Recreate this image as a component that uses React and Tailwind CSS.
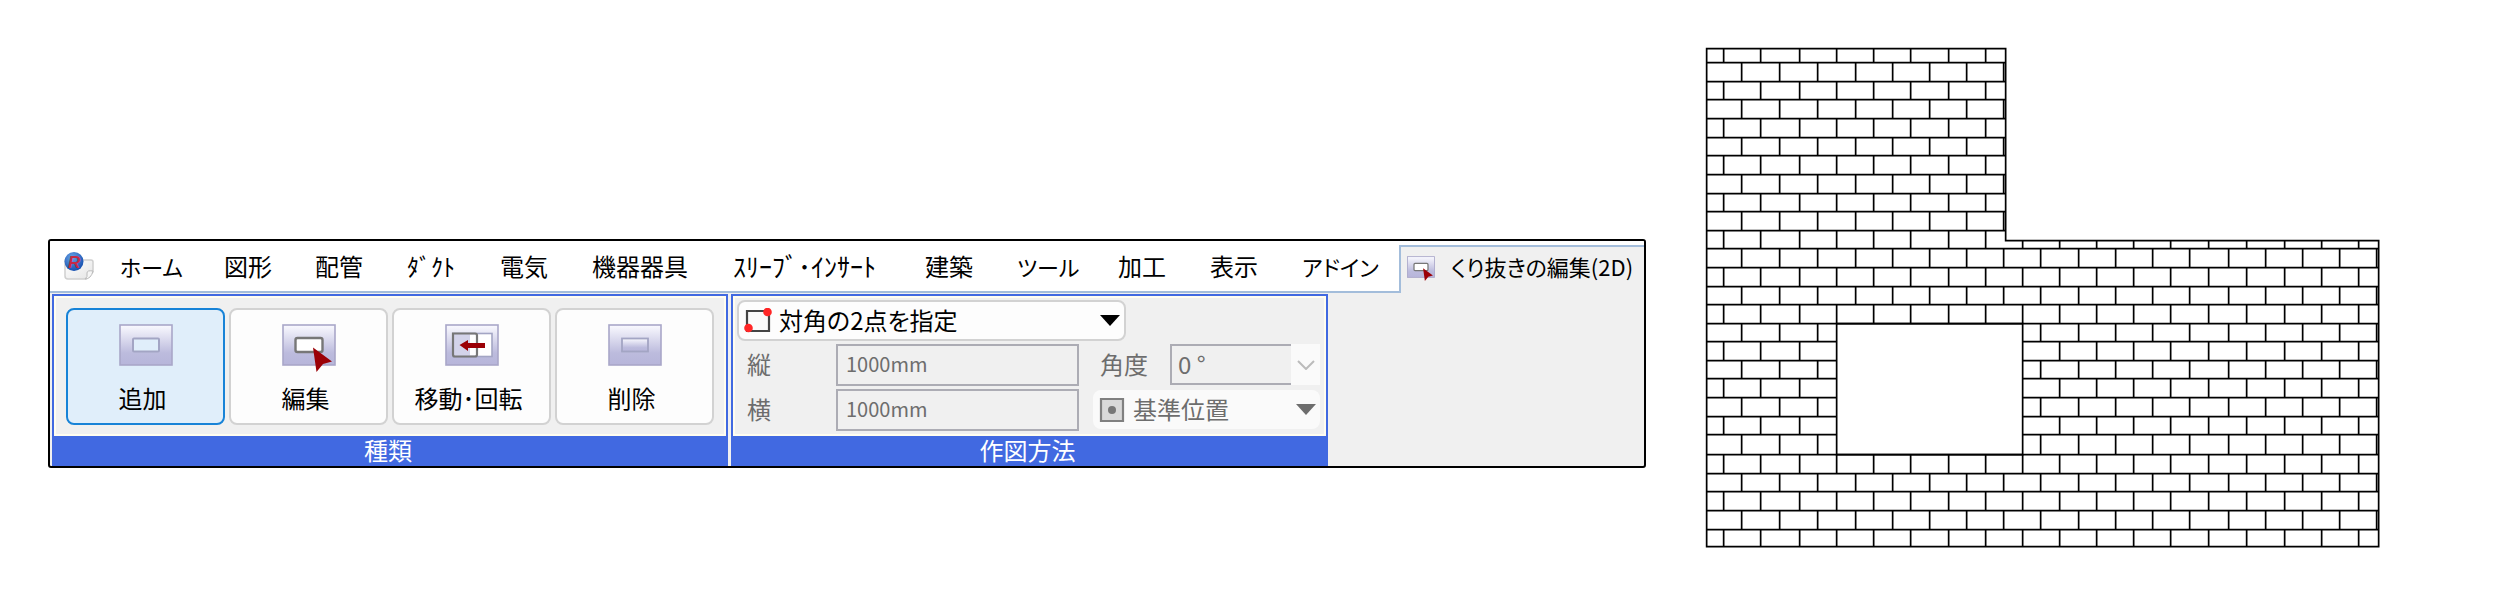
const rowLines = [48, 62, 81, 99, 118, 137, 155, 174, 193, 211, 230, 248, 267, 286, 304, 323, 341, 360, 378, 397, 416, 434, 454, 473, 491, 510, 529, 546];
const oddJoints = [1723, 1760, 1799, 1836, 1873, 1910, 1948, 1985, 2022, 2059, 2096, 2133, 2170, 2208, 2246, 2284, 2321, 2358];
const evenJoints = [1741, 1779, 1817, 1855, 1892, 1929, 1966, 2003, 2040, 2078, 2115, 2152, 2189, 2228, 2265, 2302, 2339, 2376];
const L = 1706, T = 48, R = 2378, B = 546, NX = 2005, NY = 240;
const hole = { l: 1836, r: 2022, t: 323, b: 454 };

function brickPath() {
  const d = [];
  rowLines.slice(1, -1).forEach((y) => {
    const right = y < NY ? NX : R;
    if (y > hole.t && y < hole.b) d.push(`M${L} ${y}H${hole.l}M${hole.r} ${y}H${right}`);
    else d.push(`M${L} ${y}H${right}`);
  });
  rowLines.slice(0, -1).forEach((y, i) => {
    const end = rowLines[i + 1];
    (i % 2 ? evenJoints : oddJoints).forEach((x) => {
      if (x > NX && end <= NY) return;
      if (x >= hole.l && x <= hole.r && y >= hole.t && y < hole.b) return;
      d.push(`M${x} ${x > NX ? Math.max(y, NY) : y}V${end}`);
    });
  });
  return d.join("");
}

function Wall() {
  return (
    <svg viewBox="1705 47 675 501" className="w-[675px] shrink-0" fill="none" stroke="#000" strokeWidth="1.7" role="img" aria-label="くり抜き">
      <g transform="translate(.65 .65)">
        <path d={brickPath()} />
        <path d={`M${L} ${T}H${NX}V${NY}H${R}V${B}H${L}Z`} />
        <path d={`M${hole.l} ${hole.t}H${hole.r}V${hole.b}H${hole.l}Z`} />
      </g>
    </svg>
  );
}

function Plate({ id, className, children }) {
  return (
    <svg viewBox="0 0 54 42" className={className} aria-hidden="true">
      <defs>
        <linearGradient id={id} x1="0" y1="0" x2="0" y2="1">
          <stop offset="0" stopColor="#fafaff" />
          <stop offset=".7" stopColor="#bcbbdd" />
          <stop offset="1" stopColor="#b7b5da" />
        </linearGradient>
      </defs>
      <rect x="1" y="1" width="52" height="40" fill={`url(#${id})`} stroke="#a9a7c9" strokeWidth="1.6" />
      {children}
    </svg>
  );
}

const AddIcon = () => (
  <Plate id="add" className="h-[42px] w-[54px]">
    <rect x="14" y="14.500" width="26" height="13" rx="1" fill="#e0eefa" stroke="#a3a5c4" strokeWidth="2" />
  </Plate>
);
const EditIcon = ({ id, className }) => (
  <Plate id={id} className={className}>
    <rect x="13.500" y="14" width="27" height="14" rx="2" fill="#fff" stroke="#777" strokeWidth="2.400" />
    <path d="M31 23.500 50 37.500 41 40 34.500 48Z" fill="#9b0006" />
  </Plate>
);
const MoveIcon = () => (
  <Plate id="move" className="h-[42px] w-[54px]">
    <rect x="8" y="9.500" width="39" height="23" fill="#fff" stroke="#a3a5c4" strokeWidth="1.600" />
    <path d="M8 10h17v22H8z" fill="#d3d3ea" />
    <path d="M8 9.500h22a2 2 0 0 1 2 2v19a2 2 0 0 1-2 2H10a2 2 0 0 1-2-2z" fill="none" stroke="#777" strokeWidth="2.200" />
    <path d="M14.500 21 23 16v3h17v5H23v3z" fill="#9b0006" />
  </Plate>
);
const DeleteIcon = () => (
  <Plate id="del" className="h-[42px] w-[54px]">
    <rect x="14" y="14.500" width="26" height="13" fill="url(#del)" stroke="#a3a5c4" strokeWidth="1.800" />
  </Plate>
);

const AppIcon = () => (
  <svg viewBox="0 0 32 30" className="h-[30px] w-8" aria-hidden="true">
    <defs>
      <radialGradient id="ball" cx=".4" cy=".3" r=".7">
        <stop offset="0" stopColor="#6aa4e6" />
        <stop offset="1" stopColor="#1550b0" />
      </radialGradient>
      <linearGradient id="sheet" x1="0" y1="0" x2="1" y2="1">
        <stop offset="0" stopColor="#fff" />
        <stop offset="1" stopColor="#e4e4e4" />
      </linearGradient>
    </defs>
    <path d="M2 9h26q2 0 2 2v10l-7 7H5q-3 0-3-3z" fill="url(#sheet)" stroke="#cfcfcf" strokeWidth="1.500" />
    <path d="M30 20q-6-1-6 2 1 4-2 6 6 0 8-8z" fill="#f6f6f6" stroke="#bbb" />
    <circle cx="11" cy="10.500" r="9.500" fill="url(#ball)" />
    <text x="5" y="16.500" fontFamily="Liberation Sans" fontSize="17" fontWeight="700" fontStyle="italic" fill="#c42a45">R</text>
  </svg>
);

const tabs = [
  ["ホーム", "w-[104px] text-[22px]"],
  ["図形", "w-[91px]"],
  ["配管", "w-[92px]"],
  ["ﾀﾞｸﾄ", "w-[93px]"],
  ["電気", "w-[92px]"],
  ["機器器具", "w-[141px]"],
  ["ｽﾘｰﾌﾞ･ｲﾝｻｰﾄ", "w-[192px] text-[26px]"],
  ["建築", "w-[92px]"],
  ["ツール", "w-[101px] text-[22px]"],
  ["加工", "w-[92px]"],
  ["表示", "w-[92px]"],
  ["アドイン", "text-[22px]"],
];
const tools = [
  ["追加", <AddIcon key="a" />],
  ["編集", <EditIcon key="e" id="edit" className="h-[42px] w-[54px] overflow-visible" />],
  ["移動･回転", <MoveIcon key="m" />],
  ["削除", <DeleteIcon key="d" />],
];

function Group({ title, className, children }) {
  return (
    <section className={`flex flex-col border-2 border-b-0 border-[#4169e1] bg-[#f0f0f0] ${className}`}>
      <div className="flex-1 border-2 border-[#fffdf0]">{children}</div>
      <h2 className="h-[30px] bg-[#4169e1] pr-1 text-center leading-7 text-white">{title}</h2>
    </section>
  );
}

const Caret = ({ className }) => (
  <svg viewBox="0 0 20 11" className={`pointer-events-none absolute h-[11px] w-5 ${className}`} fill="currentColor" aria-hidden="true">
    <path d="M0 0h20L10 11z" />
  </svg>
);

const field = "h-[42px] min-w-0 border-2 border-[#acacb4] bg-[#f0f0f0] pb-1 pl-2 text-xl";

export default function App() {
  return (
    <main className="flex items-start bg-white pt-[47px] pr-[120px] pl-12 font-['Noto_Sans_CJK_JP',sans-serif] text-2xl text-black">
      <div className="mt-48 mr-[59px] flex h-[229px] min-w-0 flex-1 flex-col overflow-hidden rounded-[3px] border-2 border-black bg-[#f0f0f0]">
        <nav className="flex h-[52px] shrink-0 bg-white whitespace-nowrap">
          <div className="flex flex-1 items-center border-b-2 border-[#a3bddb] pl-[13px]">
            <AppIcon />
            <div className="ml-[25px] flex [font-feature-settings:'palt']">
              {tabs.map(([name, look]) => (
                <button key={name} type="button" className={`h-9 shrink-0 text-left leading-9 ${look}`}>{name}</button>
              ))}
            </div>
          </div>
          <button type="button" className="mt-[4px] flex w-[245px] shrink-0 items-center border-t-2 border-l-2 border-[#a3bddb] bg-[#f0f0f0] pb-1.5 pl-1.5 text-[22px] [font-feature-settings:'palt']">
            <EditIcon id="tabicon" className="mr-4 h-6 w-7 shrink-0 overflow-visible" />
            くり抜きの編集(2D)
          </button>
        </nav>
        <div className="flex flex-1 gap-[3px] pt-px pl-0.5">
          <Group title="種類">
            <div className="flex gap-1 px-2.5 pt-2.5">
              {tools.map(([name, icon], i) => (
                <button
                  key={name}
                  type="button"
                  className={`flex h-[117px] w-[159px] flex-col items-center rounded-lg border-2 pt-3.5 ${i === 0 ? "border-[#1883d7] bg-[#e0eefa]" : "border-[#d2d2d2] bg-[#fdfdfd]"}`}
                >
                  {icon}
                  <span className="mt-3.5 mr-1.5 leading-9">{name}</span>
                </button>
              ))}
            </div>
          </Group>
          <Group title="作図方法" className="w-[597px]">
            <div className="flex flex-col items-start gap-[3px] pt-0.5 pl-0.5">
              <div className="relative flex items-center">
                <svg viewBox="0 0 28 26" className="pointer-events-none absolute left-[7px] h-[26px] w-7" aria-hidden="true">
                  <path d="M3 3h22v20H3z" fill="#fafafa" stroke="#444" strokeWidth="2.200" />
                  <circle cx="23.500" cy="4" r="4.300" fill="#ff2626" />
                  <circle cx="4.500" cy="20" r="4.300" fill="#ff2626" />
                </svg>
                <select aria-label="作図方法" className="h-[41px] w-[389px] appearance-none rounded-lg border-2 border-[#d2d2d2] bg-[#fdfdfd] pb-0.5 pl-10 [font-feature-settings:'palt']">
                  <option>対角の2点を指定</option>
                </select>
                <Caret className="right-1.5" />
              </div>
              <div className="grid grid-cols-[99px_243px_14px_227px] gap-y-[3px] text-[#6d6d6d]">
                <label htmlFor="tate" className="pl-2.5 leading-10">縦</label>
                <input id="tate" disabled defaultValue="1000mm" className={field} />
                <div />
                <div className="flex">
                  <label htmlFor="angle" className="w-[79px] pl-[7px] leading-10">角度</label>
                  <div className="relative flex h-[41px] items-center">
                    <select id="angle" disabled className="h-[41px] w-[150px] appearance-none border-2 border-r-0 border-[#acacb4] bg-[#f0f0f0] pb-0.5 pl-1.5 opacity-100">
                      <option>0 °</option>
                    </select>
                    <span className="pointer-events-none absolute right-0 flex h-[41px] w-[29px] items-center justify-center bg-[#fafafa]">
                      <svg viewBox="0 0 18 10" className="h-2.5 w-[18px]" fill="none" stroke="#bbb" strokeWidth="2" aria-hidden="true"><path d="m1 1 8 8 8-8" /></svg>
                    </span>
                  </div>
                </div>
                <label htmlFor="yoko" className="pl-2.5 leading-10">横</label>
                <input id="yoko" disabled defaultValue="1000mm" className={field} />
                <div />
                <div className="relative flex h-[41px] items-center">
                  <svg viewBox="0 0 26 26" className="pointer-events-none absolute left-1.5 size-[26px]" aria-hidden="true">
                    <path d="M2 2h22v22H2z" fill="#d9d9d9" stroke="#808080" strokeWidth="2.200" />
                    <circle cx="13" cy="13" r="4" fill="#777" />
                  </svg>
                  <select disabled aria-label="基準位置" className="h-[39px] w-full appearance-none rounded-lg bg-[#fafafa] pb-0.5 pl-10 opacity-100">
                    <option>基準位置</option>
                  </select>
                  <Caret className="right-1" />
                </div>
              </div>
            </div>
          </Group>
        </div>
      </div>
      <Wall />
    </main>
  );
}
